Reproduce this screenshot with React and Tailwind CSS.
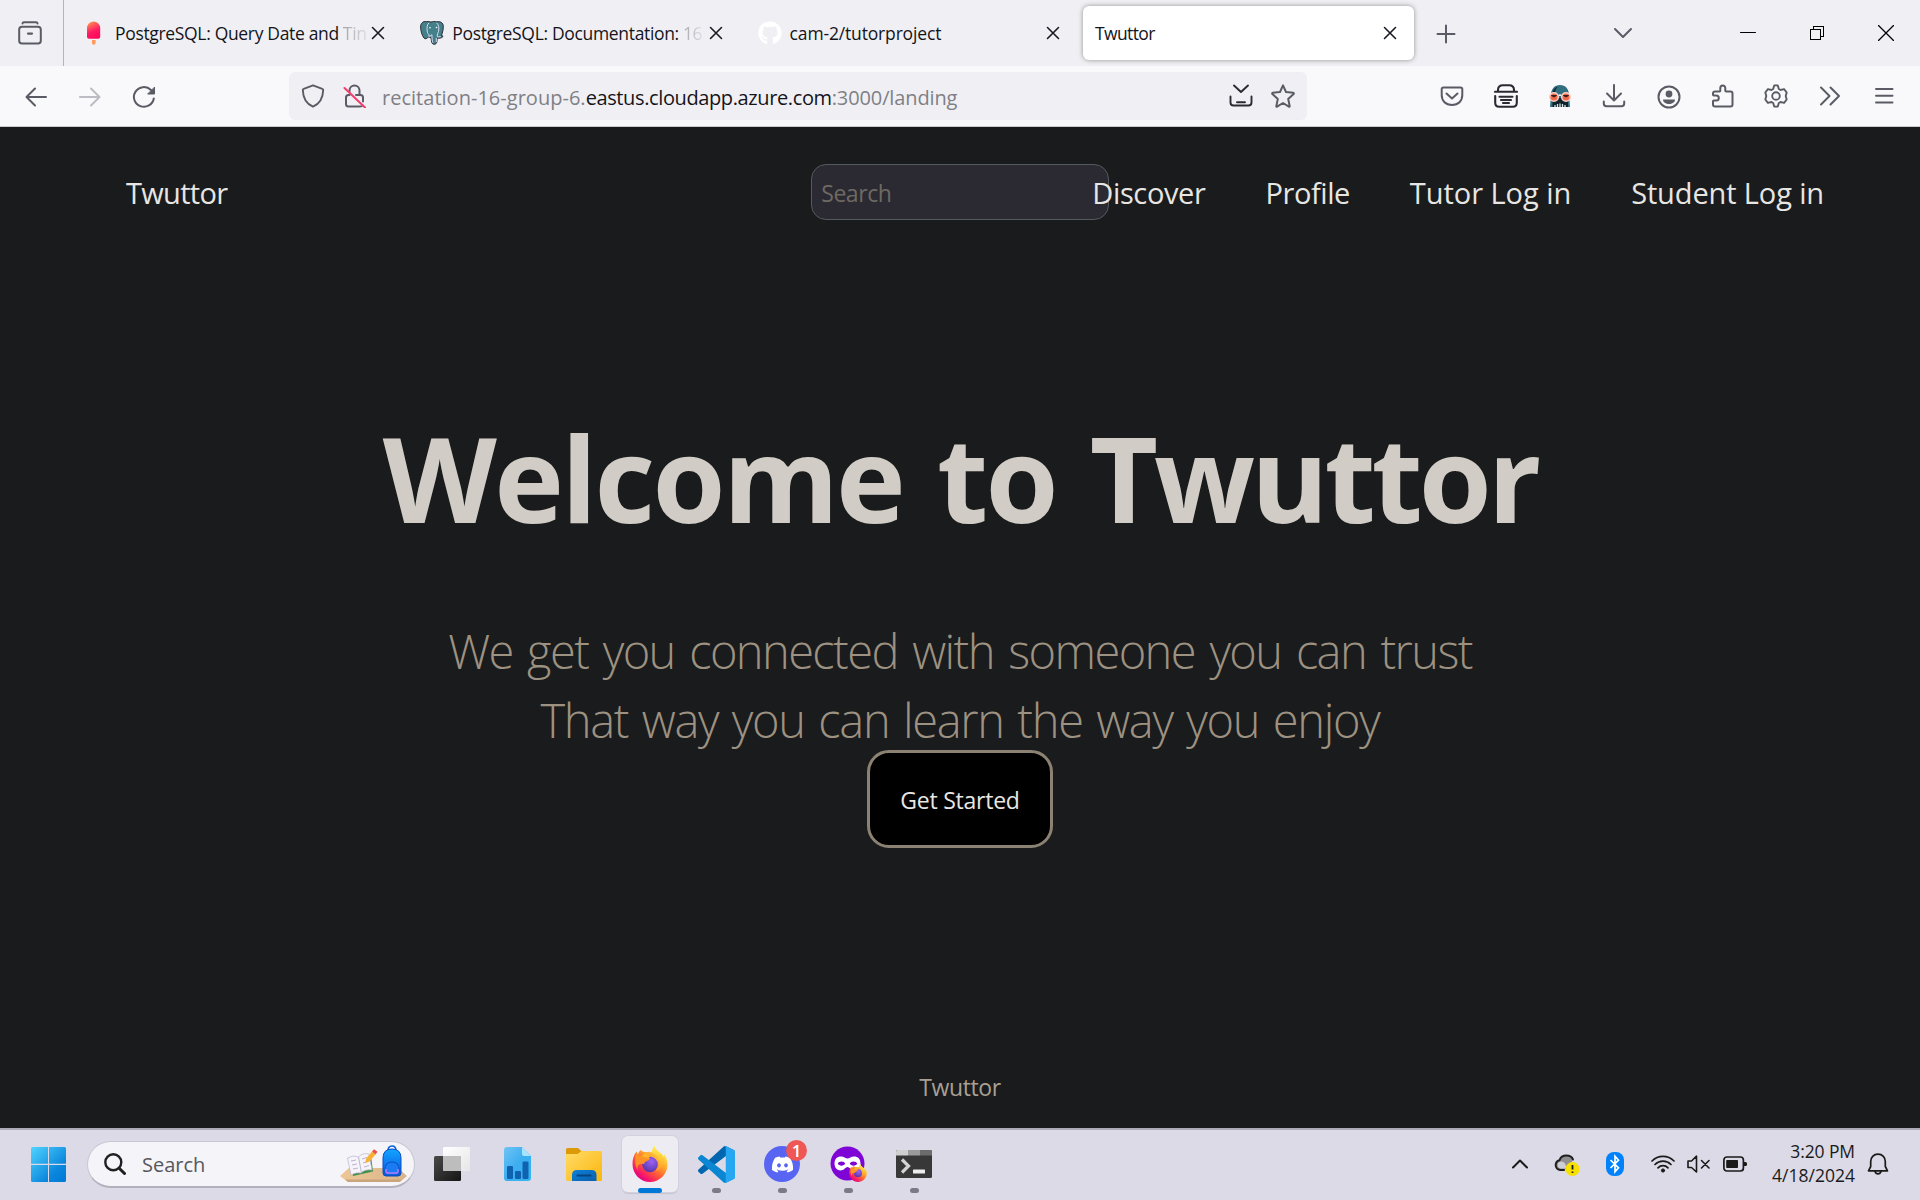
import { FaGithub, FaDiscord } from "react-icons/fa";

/* ---------- shared line icon ---------- */
function Line({ size = 24, box = 24, w = 2, color = "#5b5b66", className = "", children }) {
  return (
    <svg
      width={size}
      height={size}
      viewBox={`0 0 ${box} ${box}`}
      fill="none"
      stroke={color}
      strokeWidth={w}
      strokeLinecap="round"
      strokeLinejoin="round"
      className={`block shrink-0 ${className}`}
    >
      {children}
    </svg>
  );
}

/* ---------- favicons ---------- */
function Popsicle() {
  return (
    <svg width="24" height="24" viewBox="0 0 24 24" className="block shrink-0">
      <defs>
        <linearGradient id="pop" x1="0" y1="0" x2="0.35" y2="1">
          <stop offset="0.1" stopColor="#ff8a50" />
          <stop offset="0.65" stopColor="#ff1a64" />
          <stop offset="1" stopColor="#ff0a5a" />
        </linearGradient>
      </defs>
      <path d="M4 7.2a6.6 6.6 0 0 1 13.2 0v8.6q0 2-2 2H6q-2 0-2-2z" fill="url(#pop)" />
      <path d="M9 19h3.6v3a1.8 1.8 0 0 1-3.6 0z" fill="#ff9a5c" />
    </svg>
  );
}

function Elephant() {
  return (
    <svg width="24" height="24" viewBox="0 0 24 24" className="block shrink-0">
      <path
        d="M6.5.6C3 .1.6 2 .6 6c0 4 2 10.500 4.300 11.700 1.500.6 2.600-1.200 3.600-1.600 1 0 1.500.6 2.600.9.3 2 .2 3.800 1 5.200.7 1.300 3.200 1.400 4.100.2 1-1.400.9-3.600 1.100-5.300 2 .4 4.300.100 5.600-1.500.4-.8-.6-.9-1.600-.8C22.600 12 23.700 7 23.200 4.200 22.500.9 19 .1 16.200.9 14.500.3 12.700.4 11 1.100 9.500.6 8 .5 6.500.6z"
        fill="#43808a"
        stroke="#2b2b35"
        strokeWidth="1"
      />
      <path
        d="M9 1.800C7 3.500 6.800 7 7.200 10c.2 2 1 3.500 2.300 4M8 14.800c1.400.6 3 .5 3.500-1M11.800 13.500c.5 3-.1 6.500 1.200 8.300M16.500 1.800c2.300 2 2.800 5.500 2 8.500-.3 1.700-1.200 2.700-1.400 4.700M17 15.600c1 .4 2.500.4 3.700 0M16.300 17v4"
        fill="none"
        stroke="#d7dcf5"
        strokeWidth="1"
      />
      <circle cx="10" cy="6.800" r="0.8" fill="#fff" />
      <circle cx="16.500" cy="6.500" r="0.8" fill="#fff" />
    </svg>
  );
}

/* ---------- tab strip ---------- */
function CloseX() {
  return (
    <Line size={24} w={1.6} color="#1b1a24">
      <path d="M6.500 6.500l11 11M17.500 6.500l-11 11" />
    </Line>
  );
}

function Tab({ icon, title, faded, titleClass }) {
  return (
    <div className="flex h-[54px] w-[331.300px] shrink-0 items-center pr-3 pl-3">
      <div className="mr-2 w-6">{icon}</div>
      <div className={`w-0 flex-1 text-[17.500px] leading-6 whitespace-nowrap text-[#15141a] ${titleClass}`}>
        {title}
        {faded && (
          <span className="ml-[4px] bg-linear-to-r from-[#a5a5aa] to-[#dcdce2] bg-clip-text text-transparent">{faded}</span>
        )}
      </div>
      <CloseX />
    </div>
  );
}

function TabStrip() {
  return (
    <div className="flex h-[66px] items-stretch bg-[#f0f0f4]">
      <div className="flex w-[64px] items-center justify-center border-r border-[#b4b4ba] pr-1">
        <Line w={2}>
          <path d="M4.500 2.600C4.500 1.400 5.300 1.200 6 1.200h12c.8 0 1.500.3 1.500 1.400" />
          <rect x="1.200" y="5.700" width="21.600" height="16.800" rx="2.800" />
          <path d="M10 12.600h4" strokeWidth="2.200" />
        </Line>
      </div>
      <div className="flex items-center gap-[6px] pl-[7px]">
        <Tab icon={<Popsicle />} title="PostgreSQL: Query Date and" faded="Tin" titleClass="tracking-[-0.330px]" />
        <Tab icon={<Elephant />} title="PostgreSQL: Documentation:" faded="16" titleClass="tracking-[-0.330px]" />
        <Tab icon={<FaGithub size={24} color="#ffffff" />} title="cam-2/tutorproject" titleClass="tracking-[-0.160px]" />
        <div className="flex h-[54px] w-[331px] items-center rounded-[6px] bg-white px-3 shadow-[0_0_5px_rgba(0,0,0,0.4)]">
          <div className="flex-1 text-[17.500px] leading-6 tracking-[-0.600px] text-[#15141a]">Twuttor</div>
          <CloseX />
        </div>
      </div>
      <div className="flex flex-1 items-center pr-[26px] pl-[20px]">
        <Line className="mt-[1px]">
          <path d="M12 3.500v17M3.500 12h17" />
        </Line>
        <Line className="ml-[153px] -mt-[1px]">
          <path d="M4 8l8 8 8-8" />
        </Line>
        <div className="ml-auto flex items-center gap-[53px]">
          <Line size={16} box={16} w={1} color="#000">
            <path d="M0.500 7.500h15" />
          </Line>
          <Line size={16} box={16} w={1} color="#000" className="[shape-rendering:crispEdges]">
            <rect x="1.500" y="4.500" width="10" height="10" />
            <path d="M4.500 4.500v-3h10v10h-3" />
          </Line>
          <Line size={16} box={16} w={1.300} color="#000">
            <path d="M0.500 0.500l15 15M15.500 0.500l-15 15" />
          </Line>
        </div>
      </div>
    </div>
  );
}

/* ---------- navigation toolbar ---------- */
function Skull() {
  return (
    <svg width="24" height="24" viewBox="0 0 24 24" className="block shrink-0">
      <path d="M3 11C3 5 6.500 1 12 1s9 4 9 10l1 12H2z" fill="#2f6f80" />
      <path d="M4.500 9C5.500 5 8 3 10 2.500 7.500 5 7 7 7 9zM4.500 14h15.500v9H4.500z" fill="#10222a" />
      <path d="M9.500 23v-3M12 23v-3.500M14.500 23v-3M7 23v-2M17 23v-2" stroke="#d8e6ea" strokeWidth="1.300" />
      <circle cx="6" cy="13" r="4.300" fill="#f2694a" stroke="#fbd0c8" strokeWidth="1.500" />
      <circle cx="18" cy="13" r="4.300" fill="#f2694a" stroke="#fbd0c8" strokeWidth="1.500" />
      <path d="M3.500 11.500h5l-2.500 1.500zM15.500 11.500h5L18 13z" fill="#33201f" stroke="#33201f" />
      <path d="M10.500 11.500q1.500-1 3 0" stroke="#fff" strokeWidth="1.500" fill="none" />
    </svg>
  );
}

function UrlBar() {
  return (
    <div className="flex h-[48px] w-[1018px] items-center rounded-[6px] bg-[#f0f0f4] pr-3 pl-3">
      <Line w={1.900}>
        <path d="M12 1.300l9.300 3.500c.6.200.9.600.900 1.200C22 13 19.500 19.500 12 22.700 4.500 19.500 2 13 1.800 6c0-.6.300-1 .9-1.200z" />
      </Line>
      <Line w={2} className="ml-[18px]">
        <path d="M6.500 8V6.500a5 5 0 0 1 10 0V11" />
        <path d="M6.500 11H5.500q-2.500 0-2.500 2.500V20q0 2.500 2.500 2.500H17q2 0 2.800-1M13 11h4.500q2.500 0 2.500 2.500v4" />
        <path d="M1.500 4l20.500 19.500" stroke="#f43b6b" />
      </Line>
      <div className="ml-[15px] flex-1 pt-[3px] text-[20px] leading-7 whitespace-nowrap text-[#7f7f85]">
        <span className="tracking-[0.020px]">recitation-16-group-6.</span>
        <span className="tracking-[-0.380px] text-[#15141a]">eastus.cloudapp.azure.com</span>
        <span className="tracking-[-0.120px]">:3000/landing</span>
      </div>
      <Line w={1.900} color="#2b2a33">
        <path d="M5 1.500l7 6.500 7-6.500M1.500 12.500v6q0 3 3 3h15q3 0 3-3v-6M8 18.300h8" />
      </Line>
      <Line w={2} className="ml-[18px]">
        <path d="M12 1.300l3 6.700 7.300.800c.6.100.7.800.3 1.200L17.200 15l1.500 7.100c.100.600-.3.800-.8.500L12 19l-5.900 3.600c-.5.300-.9.100-.8-.5L6.800 15 1.400 10c-.4-.4-.3-1.100.3-1.200L9 8z" />
      </Line>
    </div>
  );
}

function Toolbar() {
  return (
    <div className="flex h-[61px] items-center border-b border-[#cccccf] bg-[#f9f9fb] pr-[24px] pl-[24px]">
      <div className="flex items-center gap-[30px] pt-[2px]">
        <Line>
          <path d="M22 12H2.500M11 3.500L2.500 12l8.500 8.500" />
        </Line>
        <Line color="#bcbcc2">
          <path d="M2 12h19.500M13 3.500l8.500 8.500-8.500 8.500" />
        </Line>
        <Line>
          <path d="M21.800 13.500a10 9.800 0 1 1-2.800-8.500" />
          <path d="M22.500 2.500v6.500h-6.500z" fill="#5b5b66" strokeWidth="1" />
        </Line>
      </div>
      <div className="ml-[133px]">
        <UrlBar />
      </div>
      <div className="ml-auto flex items-center gap-[30px]">
        <Line>
          <path d="M3.500 3.500h17q1.800 0 1.800 1.800V11c0 6-4 10-10.300 10S1.700 17 1.700 11V5.300q0-1.800 1.800-1.800z" />
          <path d="M6.500 9.500L12 14.500l5.500-5" />
        </Line>
        <Line w={2.100} color="#2b2a33">
          <path d="M4 7.500V6Q4 1.200 9 1.200h6q5 0 5 4.800v1.500M1 7.800h22M1.200 12v6.500q0 4.300 4 4.300h13.600q4 0 4-4.300V12M5.500 12.800h13M7 16h10M9 19h6" />
        </Line>
        <Skull />
        <Line>
          <path d="M12 1v15M5 9.500l7 7 7-7M1.800 17.500v2q0 2.800 2.800 2.800h14.800q2.800 0 2.800-2.800v-2" />
        </Line>
        <Line className="mt-[1px] ml-[1px] -mr-[1px]">
          <circle cx="12" cy="12" r="10.500" />
          <circle cx="12" cy="9" r="3.400" fill="#5b5b66" stroke="none" />
          <path d="M6 14.500h12c0 2.800-3 4.500-6 4.500s-6-1.700-6-4.500z" fill="#5b5b66" stroke="none" />
        </Line>
        <Line className="ml-[1px] -mr-[1px]">
          <path d="M4 7.500h4.500q.8 0 .8-.8V4a2.500 2.500 0 0 1 5 0v2.700q0 .8.800.8h4.400q2 0 2 2V20.500q0 2-2 2H4q-2 0-2-2v-3.200q0-.8.800-.8h2.500a2.500 2.500 0 0 0 0-5H2.800q-.8 0-.8-.8V9.500q0-2 2-2z" />
        </Line>
        <Line w={1.900}>
          <circle cx="12" cy="12" r="3.800" />
          <path d="M10.200 1.400h3.600l1 3.600 1.700 1 3.600-.900 2.600 3.400-1 3.500 1 3.500-2.600 3.400-3.600-.9-1.700 1-1 3.600h-3.600l-1-3.600-1.700-1-3.600.9-2.600-3.400 1-3.500-1-3.500 2.600-3.400 3.600.9 1.700-1z" />
        </Line>
        <Line>
          <path d="M3 3.500l8.500 8.500L3 20.500M12.500 3.500L21 12l-8.500 8.500" />
        </Line>
        <Line>
          <path d="M4 5h16.500M4 11.700h16.500M4 18.400h16.500" />
        </Line>
      </div>
    </div>
  );
}

/* ---------- web page ---------- */
function Page() {
  return (
    <div className="flex flex-1 flex-col bg-[#191b1c] text-[#e8e6e3]">
      <div className="flex h-[131px] items-center pr-[96px] pl-[126px] text-[29px] leading-10 whitespace-nowrap">
        <div className="tracking-[-0.700px]">Twuttor</div>
        <div className="-mt-[2px] ml-auto flex h-[56px] w-[298px] items-center rounded-[15px] border border-[#545b5f] bg-[#2b2a33] pt-[2px] pl-[9px] text-[23px] tracking-[-0.450px] text-[#6f6962]">
          Search
        </div>
        <div className="relative ml-[-17px] tracking-[-0.350px]">Discover</div>
        <div className="ml-[60px] tracking-[-0.450px]">Profile</div>
        <div className="ml-[60px] tracking-[-0.050px]">Tutor Log in</div>
        <div className="ml-[60px] tracking-[-0.130px]">Student Log in</div>
      </div>
      <div className="flex flex-1 flex-col items-center">
        <h1 className="mt-[140px] text-[118px] leading-[160px] font-bold tracking-[-2.700px] whitespace-nowrap text-[#d1cdc6] [word-spacing:6px]">
          Welcome to <span className="tracking-[-4.100px]">Twuttor</span>
        </h1>
        <div className="mt-[59px] text-center text-[47px] leading-[69px] font-light whitespace-nowrap text-[#9d9181]">
          <div className="tracking-[-1.600px] [word-spacing:3.800px]">We get you connected with someone you can trust</div>
          <div className="tracking-[-1.300px] [word-spacing:2.600px]">That way you can learn the way you enjoy</div>
        </div>
        <div className="-mt-[5px] flex h-[98px] w-[186px] items-center justify-center rounded-[22px] border-[3px] border-[#8c8273] bg-black pt-[2px] text-[23px] tracking-[-0.240px] whitespace-nowrap">
          Get Started
        </div>
      </div>
      <div className="flex h-[82px] items-center justify-center text-[23px] tracking-[-0.400px] text-[#a8a095]">Twuttor</div>
    </div>
  );
}

/* ---------- taskbar ---------- */
function WindowsLogo() {
  return (
    <svg width="35" height="35" viewBox="0 0 35 35" className="block shrink-0">
      <defs>
        <linearGradient id="win" gradientUnits="userSpaceOnUse" x1="0" y1="0" x2="35" y2="35">
          <stop offset="0" stopColor="#50d4ff" />
          <stop offset="0.700" stopColor="#0a86dc" />
          <stop offset="1" stopColor="#0078d6" />
        </linearGradient>
      </defs>
      <path d="M1.500 0H17v16.800H0V1.500Q0 0 1.500 0zM18 0h15.500Q35 0 35 1.500v15.300H18zM0 18h17v17H1.500Q0 35 0 33.500zM18 18h17v15.500q0 1.500-1.500 1.500H18z" fill="url(#win)" />
    </svg>
  );
}

function SchoolArt() {
  return (
    <svg width="67" height="38" viewBox="0 0 67 38" className="block shrink-0">
      <defs>
        <linearGradient id="pack" x1="0" y1="0" x2="0" y2="1">
          <stop offset="0" stopColor="#12a5ff" />
          <stop offset="1" stopColor="#0a55e0" />
        </linearGradient>
        <linearGradient id="desk" x1="0" y1="0" x2="1" y2="0">
          <stop offset="0" stopColor="#edc795" />
          <stop offset="1" stopColor="#d9b48a" />
        </linearGradient>
      </defs>
      <path d="M0 31L9 23h49l9 8-7 6H8z" fill="url(#desk)" />
      <path d="M5 34.500h57l-3 2.500H8z" fill="#c9a47c" />
      <path d="M9 16l22-5 2 15.500-20 4.500z" fill="#3f8f4a" />
      <path d="M7.500 13q6-3.500 11-1 4-4.500 10.500-3l3 16q-7-1-11 3-5-1-10 2z" fill="#f7f3fb" stroke="#b9b3cc" strokeWidth="0.700" />
      <path d="M18.500 12l3 16M11 16l5-1M12 20l5-1M13 24l5-1M22 14l5-1.500M23 18l5-1.500M24 22l5-1.500" stroke="#a9a4c0" strokeWidth="0.800" />
      <path d="M25 18l1.500-5L32 6.500l3.500 3-6 7z" fill="#f8b233" />
      <path d="M32 6.500l2-2.300 3.500 2.500-2 2.800z" fill="#ee5246" />
      <path d="M48 6q0-5 4-5t4 5" fill="none" stroke="#0a60d8" strokeWidth="1.600" />
      <path d="M43 13q0-9 9-9t9 9v15q0 3-3 3H46q-3 0-3-3z" fill="url(#pack)" stroke="#0b4fc4" strokeWidth="1" />
      <path d="M45 25q0-8 7-8t7 8v3q0 2-2 2H47q-2 0-2-2z" fill="#1a7bf2" stroke="#0846b8" strokeWidth="0.800" />
      <path d="M46 24v2.500q0 1.500 1.500 1.500h9q1.500 0 1.500-1.500V24" fill="none" stroke="#b678ff" strokeWidth="1.500" />
    </svg>
  );
}

function FirefoxIcon({ size, id }) {
  return (
    <svg width={size} height={size} viewBox="0 0 36 36" className="block shrink-0">
      <defs>
        <linearGradient id={`${id}a`} x1="0.850" y1="0.100" x2="0.200" y2="0.950">
          <stop offset="0" stopColor="#fff44f" />
          <stop offset="0.350" stopColor="#ffa42e" />
          <stop offset="0.600" stopColor="#ff5a36" />
          <stop offset="0.850" stopColor="#f5156c" />
          <stop offset="1" stopColor="#d6008c" />
        </linearGradient>
        <radialGradient id={`${id}b`} cx="0.600" cy="0.300" r="0.800">
          <stop offset="0" stopColor="#9d62f5" />
          <stop offset="0.600" stopColor="#6b45c6" />
          <stop offset="1" stopColor="#5b2d9c" />
        </radialGradient>
        <linearGradient id={`${id}c`} x1="0.500" y1="0" x2="0.500" y2="1">
          <stop offset="0" stopColor="#fff44f" />
          <stop offset="1" stopColor="#ff9a20" />
        </linearGradient>
      </defs>
      <path
        d="M22.500 0c-2 2.500-2.600 4.600-2 6.500-2-.9-4.500-1-6.500-.2-2.500-.2-4.200-1-5-2.300C7 5.200 6.300 7 6.200 8.500 5 7.800 4.600 6.800 4.500 5.500 1.600 9 .400 13.500.500 18.500.700 28.300 8.500 36 18 36s17.300-7.700 17.500-17c.1-4.200-1-8-3.500-11 .3 1.600.2 2.800 0 4C30.800 6.200 24 6.500 22.500 0z"
        fill={`url(#${id}a)`}
      />
      <path d="M22.500 0c-2 2.500-2.600 4.600-2 6.500 5 2.500 7 7 6.500 12-.300 3-2 5.500-4 7 7-1.500 9.500-8 8.500-13.500C30 7 24 6 22.500 0z" fill={`url(#${id}c)`} opacity="0.850" />
      <circle cx="18" cy="18.500" r="7.800" fill={`url(#${id}b)`} />
      <path d="M4.500 5.500C5 8 7 10 9.500 10.300c3 .2 4.500.6 8.500 1.900-.500 2-2.500 2.500-4.500 3.500-1 .6-.8 2-2.300 2.300C8 17 4 19 6 25 2 19 3 10 4.500 5.500z" fill="#ff9226" />
      <path d="M9.500 10.300L14 6.300c.500 2 2 3.200 4 3.600l-1.500 2.300z" fill="#ffb52c" />
    </svg>
  );
}

function AppSlot({ children, running, active }) {
  return (
    <div className={`relative flex size-[56px] items-center justify-center rounded-[6px] ${active ? "bg-[#edecf3] shadow-[0_0_0_1px_#d3d1de,0_2px_1px_#c5c3d0]" : ""}`}>
      {children}
      {running && <div className="absolute bottom-[-1px] h-[5px] w-[9px] rounded-full bg-[#7b7a86]" />}
      {active && <div className="absolute bottom-[-1px] h-[5px] w-[24px] rounded-full bg-[#0078d8]" />}
    </div>
  );
}

function TaskIcons() {
  return (
    <div className="ml-[9px] flex items-center gap-[10px]">
      <AppSlot>
        <svg width="36" height="36" viewBox="0 0 36 36">
          <defs>
            <linearGradient id="tvd" x1="0" y1="0" x2="1" y2="1">
              <stop offset="0" stopColor="#494949" />
              <stop offset="1" stopColor="#151515" />
            </linearGradient>
            <linearGradient id="tvl" x1="0" y1="0" x2="1" y2="1">
              <stop offset="0" stopColor="#ffffff" />
              <stop offset="1" stopColor="#e6e6e8" />
            </linearGradient>
          </defs>
          <rect x="0" y="10" width="27" height="25" rx="1.500" fill="url(#tvd)" />
          <rect x="9" y="1" width="27" height="24" rx="1.500" fill="url(#tvl)" />
          <path d="M9 10h18v15H10.500Q9 25 9 23.500z" fill="#bdbdbd" />
        </svg>
      </AppSlot>
      <AppSlot>
        <svg width="36" height="36" viewBox="0 0 36 36">
          <defs>
            <linearGradient id="doc" x1="0" y1="0" x2="1" y2="1">
              <stop offset="0" stopColor="#6fc4f4" />
              <stop offset="0.500" stopColor="#3daef0" />
              <stop offset="1" stopColor="#35b5f0" />
            </linearGradient>
          </defs>
          <path d="M7 1h15l9 9v22q0 3-3 3H7q-3 0-3-3V4q0-3 3-3z" fill="url(#doc)" />
          <path d="M22 1l9 9h-7q-2 0-2-2z" fill="#a8e4ff" />
          <g fill="#0f62b0">
            <rect x="7" y="20" width="6" height="13" rx="1.300" />
            <rect x="15" y="25" width="6" height="8" rx="1.300" />
            <rect x="22.500" y="15.500" width="6" height="17.500" rx="1.300" />
          </g>
        </svg>
      </AppSlot>
      <AppSlot>
        <svg width="36" height="36" viewBox="0 0 36 36">
          <defs>
            <linearGradient id="fold" x1="0" y1="0" x2="1" y2="1">
              <stop offset="0" stopColor="#ffdb69" />
              <stop offset="1" stopColor="#fbb60c" />
            </linearGradient>
            <linearGradient id="foldb" x1="0" y1="0" x2="1" y2="1">
              <stop offset="0" stopColor="#0d80d8" />
              <stop offset="1" stopColor="#0a60ae" />
            </linearGradient>
          </defs>
          <path d="M1.500 2H12l4 3.500V9H0V3.500Q0 2 1.500 2z" fill="#dc9a08" />
          <path d="M0 8h11.500l4-3H34.500Q36 5 36 6.500v27q0 1.500-1.500 1.500h-33Q0 35 0 33.500z" fill="url(#fold)" />
          <path d="M6 35v-6q0-5 5-5h14.500q5 0 5 5v6z" fill="url(#foldb)" />
          <rect x="10.500" y="28.500" width="15" height="2" rx="1" fill="#08447e" />
        </svg>
      </AppSlot>
      <AppSlot active>
        <FirefoxIcon size={36} id="ff" />
      </AppSlot>
      <AppSlot running>
        <svg width="37" height="37" viewBox="0 0 100 100">
          <path d="M96.460 10.800L75.860.880C73.470-.270 70.620.210 68.750 2.080L1.300 63.580C-.520 65.240-.510 68.090 1.300 69.750L6.810 74.750C8.300 76.100 10.530 76.200 12.130 74.990L93.360 13.370C96.090 11.300 100 13.250 100 16.670V16.430C100 14.030 98.620 11.840 96.460 10.800Z" fill="#0066b0" />
          <path d="M96.460 89.200L75.860 99.120C73.470 100.270 70.620 99.790 68.750 97.920L1.300 36.420C-.520 34.760-.510 31.910 1.300 30.250L6.810 25.250C8.300 23.900 10.530 23.800 12.130 25.010L93.360 86.630C96.090 88.700 100 86.750 100 83.330V83.570C100 85.970 98.620 88.160 96.460 89.200Z" fill="#0a86d2" />
          <path d="M75.860 99.130C73.470 100.270 70.620 99.790 68.750 97.920C71.060 100.220 75 98.590 75 95.330V4.670C75 1.410 71.060-.220 68.750 2.080C70.620.210 73.470-.270 75.860.870L96.460 10.780C98.620 11.820 100 14.010 100 16.410V83.590C100 85.990 98.620 88.180 96.460 89.220L75.860 99.130Z" fill="#27a6f2" />
        </svg>
      </AppSlot>
      <AppSlot running>
        <div className="flex size-[36px] items-center justify-center rounded-full bg-[#5865f2]">
          <FaDiscord size={23} color="#ffffff" />
        </div>
        <div className="absolute top-[4px] right-[3px] flex size-[21px] items-center justify-center rounded-full bg-[#ef5656] text-[17px] leading-none font-semibold text-white">1</div>
      </AppSlot>
      <AppSlot running>
        <svg width="36" height="36" viewBox="0 0 36 36">
          <circle cx="17.500" cy="17.500" r="17" fill="#7f04d6" />
          <path
            fillRule="evenodd"
            d="M11 10.500c3 0 4.500 2 6.500 2s3.500-2 6.500-2c4 0 6.500 2.500 6.500 7 0 4-2.500 7-6 7-3.500 0-5-3.500-7-3.500s-3.500 3.500-7 3.500c-3.500 0-6-3-6-7 0-4.500 2.500-7 6.500-7zM11.500 15.500c-2 0-3.200.9-3.800 2 .8 1.300 2 2.200 3.800 2.200 1.900 0 3-.900 3.700-2.200-.700-1.100-1.800-2-3.700-2zM23.500 15.500c-1.900 0-3 .9-3.700 2 .7 1.300 1.800 2.200 3.700 2.200s3-.9 3.800-2.200c-.7-1.100-1.900-2-3.800-2z"
            fill="#fff"
          />
        </svg>
        <div className="absolute right-[9px] bottom-[10px]">
          <FirefoxIcon size={18} id="fp" />
        </div>
      </AppSlot>
      <AppSlot running>
        <svg width="36" height="28" viewBox="0 0 36 28">
          <rect width="36" height="28" rx="1.500" fill="#383838" />
          <path d="M1.500 0H12v5.500H0V1.500Q0 0 1.500 0z" fill="#cfcfcf" />
          <path d="M12 0h12v5.500H12z" fill="#9b9b9b" />
          <path d="M24 0h10.500Q36 0 36 1.500v4H24z" fill="#6c6c6c" />
          <path d="M6 9.500L12.500 16 6 22.500" fill="none" stroke="#d4d4d4" strokeWidth="3.200" />
          <rect x="17" y="19.500" width="12" height="4" rx="0.600" fill="#ededed" />
        </svg>
      </AppSlot>
    </div>
  );
}

function Tray() {
  return (
    <div className="mr-[31px] ml-auto flex items-center text-[#1a1a1a]">
      <Line size={24} w={2} color="#1a1a1a">
        <path d="M5 15.500l7-7 7 7" />
      </Line>
      <svg width="26" height="24" viewBox="0 0 26 24" className="ml-[22px] block">
        <path d="M11 18H6a5 5 0 0 1-.500-9.800C6.500 5 9.500 3.500 12.500 3.500c3 0 5.500 1.800 6.500 4.500l-4 6z" fill="#8e8e90" />
        <path d="M4 11q4-3 7 .5l2 5H6q-3-1-2-5.500z" fill="#cfced6" />
        <path d="M10 18H6a5 5 0 0 1-.500-9.800C6.500 5 9.500 3.500 12.500 3.500c3 0 5.500 1.300 6.500 4" fill="none" stroke="#1f1f1f" strokeWidth="2" strokeLinecap="round" />
        <circle cx="18.500" cy="17" r="7" fill="#f8e000" />
        <path d="M18.500 13v4.500M18.500 19.500v1.500" stroke="#1f1f1f" strokeWidth="1.800" />
      </svg>
      <svg width="18" height="24" viewBox="0 0 18 24" className="ml-[26px] block">
        <rect width="18" height="24" rx="8" fill="#0082fc" />
        <path d="M4.500 8l8 7.800-3.500 4V4.200l3.500 4-8 7.800" fill="none" stroke="#fff" strokeWidth="1.700" />
      </svg>
      <Line size={24} w={1.700} color="#1a1a1a" className="ml-[27px]">
        <path d="M1 9a15.500 15.500 0 0 1 22 0M4 12.500a11.300 11.300 0 0 1 16 0M7 15.800a7 7 0 0 1 10 0" />
        <circle cx="12" cy="18.500" r="1.600" fill="#1a1a1a" stroke="#1a1a1a" strokeWidth="1" />
      </Line>
      <Line size={24} w={1.600} color="#1a1a1a" className="ml-[12px]">
        <path d="M1 9h3.500L9.500 4.200v15.800L4.500 15.500H1zM14.500 8.500l7.500 7.500M22 8.500L14.500 16" />
      </Line>
      <svg width="24" height="24" viewBox="0 0 24 24" className="ml-[12px] block">
        <rect x="0.900" y="5" width="19.500" height="14" rx="3" fill="none" stroke="#1a1a1a" strokeWidth="1.700" />
        <rect x="3.200" y="8" width="11.800" height="8" rx="0.800" fill="#1a1a1a" />
        <path d="M21 10h1.500Q24 10 24 11.500v1Q24 14 22.500 14H21z" fill="#1a1a1a" />
      </svg>
      <div className="ml-[25px] pb-[2px] text-right text-[17.500px] leading-6 whitespace-nowrap">
        <div className="tracking-[-0.100px]">3:20 PM</div>
        <div>4/18/2024</div>
      </div>
      <Line size={22} box={22} w={1.700} color="#1a1a1a" className="ml-[12px]">
        <path d="M11 1.200c-4.500 0-7.300 3.300-7.300 7.300v5L1.500 17.800h19l-2.200-4.300v-5c0-4-2.800-7.300-7.300-7.300zM8 18.500c.5 1.500 1.500 2.300 3 2.300s2.500-.8 3-2.300" />
      </Line>
    </div>
  );
}

function Taskbar() {
  return (
    <div className="flex h-[72px] items-center border-t-2 border-[#adabb7] bg-[#dcdae6] pb-[2px] pl-[31px]">
      <WindowsLogo />
      <div className="ml-[21px] flex h-[47px] w-[328px] items-center rounded-full border border-b-2 border-[#c9c7d4] border-b-[#b3b1bf] bg-[#f4f4f9] pr-[7px] pl-[16px]">
        <Line size={22} box={22} w={2.400} color="#202020">
          <circle cx="9.300" cy="9.300" r="8" />
          <path d="M15.200 15.200l5.300 5.300" strokeWidth="3" />
        </Line>
        <div className="ml-[16px] flex-1 pt-[2px] text-[20px] text-[#57575c]">Search</div>
        <SchoolArt />
      </div>
      <TaskIcons />
      <Tray />
    </div>
  );
}

export default function App() {
  return (
    <div className="flex h-[1200px] w-[1920px] flex-col overflow-hidden font-['Open_Sans','Noto_Sans',sans-serif]">
      <TabStrip />
      <Toolbar />
      <Page />
      <Taskbar />
    </div>
  );
}
